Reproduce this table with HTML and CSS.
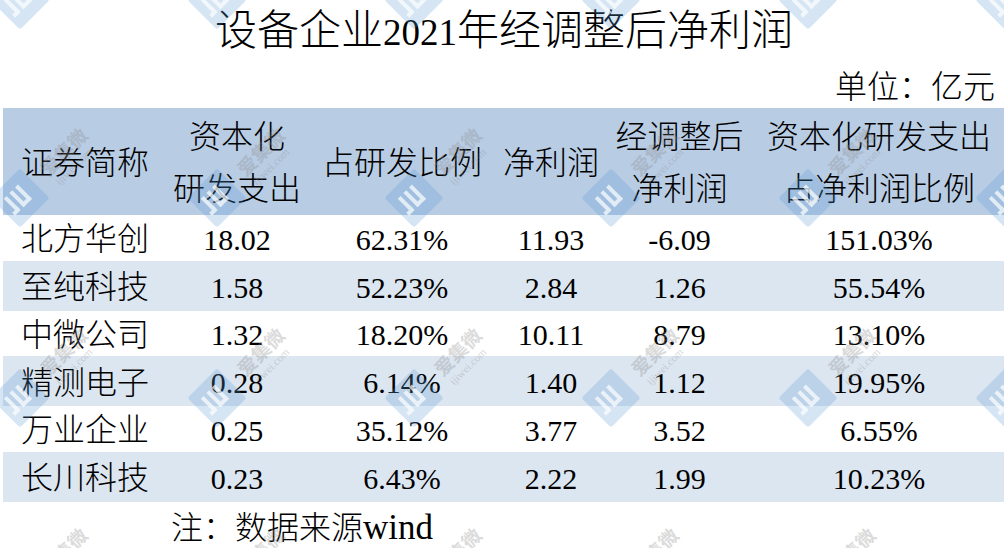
FILE: index.html
```html
<!DOCTYPE html>
<html lang="zh-CN">
<head>
<meta charset="utf-8">
<title>设备企业2021年经调整后净利润</title>
<link rel="stylesheet" href="styles.css">
</head>
<body>
<div class="page">
  <h1 class="title">设备企业<span class="title-num">2021</span>年经调整后净利润</h1>
  <div class="unit">单位：亿元</div>
  <table class="data">
    <colgroup>
      <col class="c1"><col class="c2"><col class="c3"><col class="c4"><col class="c5"><col class="c6">
    </colgroup>
    <thead>
      <tr>
        <th>证券简称</th>
        <th>资本化<br>研发支出</th>
        <th>占研发比例</th>
        <th>净利润</th>
        <th>经调整后<br>净利润</th>
        <th>资本化研发支出<br>占净利润比例</th>
      </tr>
    </thead>
    <tbody>
      <tr class="odd"><td class="name">北方华创</td><td><span class="num">18.02</span></td><td><span class="num">62.31%</span></td><td><span class="num">11.93</span></td><td><span class="num">-6.09</span></td><td><span class="num">151.03%</span></td></tr>
      <tr class="even"><td class="name">至纯科技</td><td><span class="num">1.58</span></td><td><span class="num">52.23%</span></td><td><span class="num">2.84</span></td><td><span class="num">1.26</span></td><td><span class="num">55.54%</span></td></tr>
      <tr class="odd"><td class="name">中微公司</td><td><span class="num">1.32</span></td><td><span class="num">18.20%</span></td><td><span class="num">10.11</span></td><td><span class="num">8.79</span></td><td><span class="num">13.10%</span></td></tr>
      <tr class="even"><td class="name">精测电子</td><td><span class="num">0.28</span></td><td><span class="num">6.14%</span></td><td><span class="num">1.40</span></td><td><span class="num">1.12</span></td><td><span class="num">19.95%</span></td></tr>
      <tr class="odd"><td class="name">万业企业</td><td><span class="num">0.25</span></td><td><span class="num">35.12%</span></td><td><span class="num">3.77</span></td><td><span class="num">3.52</span></td><td><span class="num">6.55%</span></td></tr>
      <tr class="even"><td class="name">长川科技</td><td><span class="num">0.23</span></td><td><span class="num">6.43%</span></td><td><span class="num">2.22</span></td><td><span class="num">1.99</span></td><td><span class="num">10.23%</span></td></tr>
    </tbody>
  </table>
  <div class="note">注：数据来源<span class="num-note">wind</span></div>

  <svg class="watermark" width="1004" height="548" viewBox="0 0 1004 548" aria-hidden="true">
    <defs>
      <g id="logo">
        <g transform="rotate(45)">
          <rect x="-21" y="-21" width="42" height="42" rx="3" fill="#5b9bd5" opacity="0.26"/>
        </g>
        <g transform="rotate(-45)" fill="#ffffff" opacity="0.7">
          <rect x="-12" y="-11" width="4" height="18"/>
          <rect x="-16" y="5" width="8" height="4"/>
          <rect x="-4" y="-11" width="4" height="20"/>
          <rect x="4" y="-11" width="4" height="20"/>
          <rect x="-4" y="5" width="12" height="4"/>
        </g>
      </g>
      <g id="mark">
        <use href="#logo"/>
        <g transform="translate(50,-42) rotate(-45)" fill="#8a8a8a" opacity="0.3">
          <text x="-30" y="0" font-size="19" font-weight="700" font-family="'Noto Sans CJK SC', sans-serif">爱集微</text>
          <text x="-28" y="14" font-size="11" font-family="'Liberation Serif', serif">ijiwei.com</text>
        </g>
      </g>
    </defs>
    <use href="#mark" x="20" y="0"/>
    <use href="#mark" x="217" y="0"/>
    <use href="#mark" x="414" y="0"/>
    <use href="#mark" x="611" y="0"/>
    <use href="#mark" x="808" y="0"/>
    <use href="#mark" x="1005" y="0"/>
    <use href="#mark" x="20" y="198"/>
    <use href="#mark" x="217" y="198"/>
    <use href="#mark" x="414" y="198"/>
    <use href="#mark" x="611" y="198"/>
    <use href="#mark" x="808" y="198"/>
    <use href="#mark" x="1005" y="198"/>
    <use href="#mark" x="20" y="398"/>
    <use href="#mark" x="217" y="398"/>
    <use href="#mark" x="414" y="398"/>
    <use href="#mark" x="611" y="398"/>
    <use href="#mark" x="808" y="398"/>
    <use href="#mark" x="1005" y="398"/>
    <use href="#mark" x="20" y="598"/>
    <use href="#mark" x="217" y="598"/>
    <use href="#mark" x="414" y="598"/>
    <use href="#mark" x="611" y="598"/>
    <use href="#mark" x="808" y="598"/>
    <use href="#mark" x="1005" y="598"/>
  </svg>
</div>
</body>
</html>
```

FILE: styles.css
```css
html, body {
  margin: 0;
  padding: 0;
  background: #ffffff;
}

body {
  width: 1004px;
  height: 548px;
  overflow: hidden;
  color: #000000;
  font-family: "Liberation Serif", "Noto Sans CJK SC", serif;
  font-weight: 300;
}

.page {
  position: relative;
  width: 1004px;
  height: 548px;
}

.title {
  margin: 0;
  height: 62px;
  font-size: 42px;
  font-weight: 300;
  line-height: 62px;
  text-align: center;
  padding-left: 4px;
  box-sizing: border-box;
}

.title-num {
  font-family: "Liberation Serif", serif;
  font-weight: 400;
  font-size: 37px;
}

.unit {
  height: 46px;
  box-sizing: border-box;
  padding-right: 9px;
  padding-top: 5px;
  font-size: 32px;
  line-height: 40px;
  text-align: right;
}

.data {
  margin-left: 3px;
  width: 1001px;
  border-collapse: collapse;
  table-layout: fixed;
  font-family: "Liberation Serif", "Noto Sans CJK SC", serif;
}

.c1 { width: 164px; }
.c2 { width: 140px; }
.c3 { width: 190px; }
.c4 { width: 108px; }
.c5 { width: 149px; }
.c6 { width: 250px; }

.data th {
  height: 105px;
  padding: 2px 0 0 0;
  background: #b8cce4;
  font-size: 32px;
  font-weight: 300;
  line-height: 52px;
  text-align: center;
  vertical-align: middle;
  white-space: nowrap;
}

.data td {
  padding: 3px 0 0 0;
  font-size: 32px;
  font-weight: 300;
  line-height: 40px;
  text-align: center;
  vertical-align: middle;
  white-space: nowrap;
}

.num {
  font-family: "Liberation Serif", serif;
  font-weight: 400;
  font-size: 30px;
}

.num-note {
  font-family: "Liberation Serif", serif;
  font-weight: 400;
  font-size: 35px;
}

.data tr.odd td {
  height: 42.5px;
  background: #ffffff;
}

.data tr.even td {
  height: 47px;
  background: #dce6f1;
}

.note {
  padding-left: 171px;
  padding-top: 8px;
  font-size: 32px;
  line-height: 36px;
}

.watermark {
  position: absolute;
  left: 0;
  top: 0;
  pointer-events: none;
}
```
